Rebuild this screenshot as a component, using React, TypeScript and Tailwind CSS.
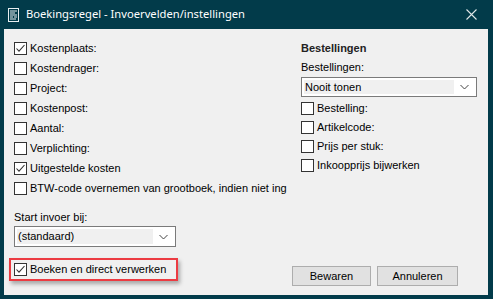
const font = { fontFamily: '"Liberation Sans", Arial, sans-serif' };

function Box({ checked }: { checked?: boolean }) {
  return (
    <span className="w-[13px] h-[13px] shrink-0 border border-[#333333] bg-white flex items-center justify-center">
      {checked && (
        <svg width="11" height="11" viewBox="0 0 11 11">
          <path d="M1.5 5.5 L4 8.2 L9.5 2" fill="none" stroke="#333333" strokeWidth="1.1" />
        </svg>
      )}
    </span>
  );
}

function Check({ label, checked, h = "h-[20px]" }: { label: string; checked?: boolean; h?: string }) {
  return (
    <div className={`flex items-center gap-[3px] ${h}`}>
      <Box checked={checked} />
      <span className="text-[11px] text-black whitespace-nowrap">{label}</span>
    </div>
  );
}

function Select({ value, w, h }: { value: string; w: string; h: string }) {
  return (
    <div className={`${w} ${h} border border-[#7a7a7a] bg-white flex items-center p-[2px]`}>
      <div className="flex-1 h-full bg-[#f0f0f0] flex items-center pl-[1px] text-[11px] text-black">{value}</div>
      <div className="w-[20px] h-full flex items-center justify-center">
        <svg width="9" height="6" viewBox="0 0 9 6">
          <path d="M0.5 1 L4.5 5 L8.5 1" fill="none" stroke="#444" strokeWidth="1" />
        </svg>
      </div>
    </div>
  );
}

export default function App() {
  return (
    <div className="w-[493px] h-[299px] bg-[#023b4a] flex flex-col" style={font}>
      {/* Title bar */}
      <div className="h-[29px] flex items-center pl-[8px] pr-[16px]">
        <svg width="11" height="14" viewBox="0 0 11 14" className="shrink-0">
          <rect x="0.5" y="0.5" width="10" height="13" fill="none" stroke="#e8eef0" strokeWidth="1" />
          <path d="M2 3h7M2 5h5M2 7h7M2 9h3M6 9h3M2 11h6" stroke="#e8eef0" strokeWidth="1" />
        </svg>
        <span className="ml-[7px] text-[11.2px] text-white" style={{ fontFamily: '"Noto Sans", sans-serif' }}>
          Boekingsregel - Invoervelden/instellingen
        </span>
        <svg width="11" height="11" viewBox="0 0 11 11" className="ml-auto">
          <path d="M0.5 0.5 L10.5 10.5 M10.5 0.5 L0.5 10.5" stroke="#dfe6e8" strokeWidth="1.1" />
        </svg>
      </div>

      {/* Client area */}
      <div className="ml-[4px] mr-[5px] h-[266px] bg-[#f0f0f0] flex flex-col pt-[9px] pl-[10px]">
        <div className="flex">
          <div className="w-[287px] flex flex-col">
            <Check label="Kostenplaats:" checked />
            <Check label="Kostendrager:" />
            <Check label="Project:" />
            <Check label="Kostenpost:" />
            <Check label="Aantal:" />
            <Check label="Verplichting:" />
            <Check label="Uitgestelde kosten" checked />
            <Check label="BTW-code overnemen van grootboek, indien niet ing" />
          </div>
          <div className="flex flex-col">
            <div className="h-[20px] flex items-center text-[11px] font-bold text-[#222]">Bestellingen</div>
            <div className="h-[19px] flex items-center text-[11px] text-black">Bestellingen:</div>
            <Select value="Nooit tonen" w="w-[176px]" h="h-[20px]" />
            <div className="mt-[2px] flex flex-col">
              <Check label="Bestelling:" h="h-[19px]" />
              <Check label="Artikelcode:" h="h-[19px]" />
              <Check label="Prijs per stuk:" h="h-[19px]" />
              <Check label="Inkoopprijs bijwerken" h="h-[19px]" />
            </div>
          </div>
        </div>

        <div className="flex flex-1 pr-[30px]">
          <div className="flex flex-col">
            <div className="mt-[12px] h-[14px] flex items-center text-[11px] text-black">Start invoer bij:</div>
            <div className="mt-[2px]">
              <Select value="(standaard)" w="w-[162px]" h="h-[21px]" />
            </div>
            <div className="mt-[11px] -ml-[5px] w-[169px] h-[23px] border-2 border-[#ec3b42] flex items-center pl-[3px] shadow-[2px_3px_4px_rgba(0,0,0,0.3)]">
              <Check label="Boeken en direct verwerken" checked />
            </div>
          </div>
          <div className="ml-auto self-end mb-[9px] flex gap-[6px]">
            <button className="w-[79px] h-[20px] bg-[#e1e1e1] border border-[#adadad] text-[11px] text-black">Bewaren</button>
            <button className="w-[81px] h-[20px] bg-[#e1e1e1] border border-[#adadad] text-[11px] text-black">Annuleren</button>
          </div>
        </div>
      </div>
    </div>
  );
}
